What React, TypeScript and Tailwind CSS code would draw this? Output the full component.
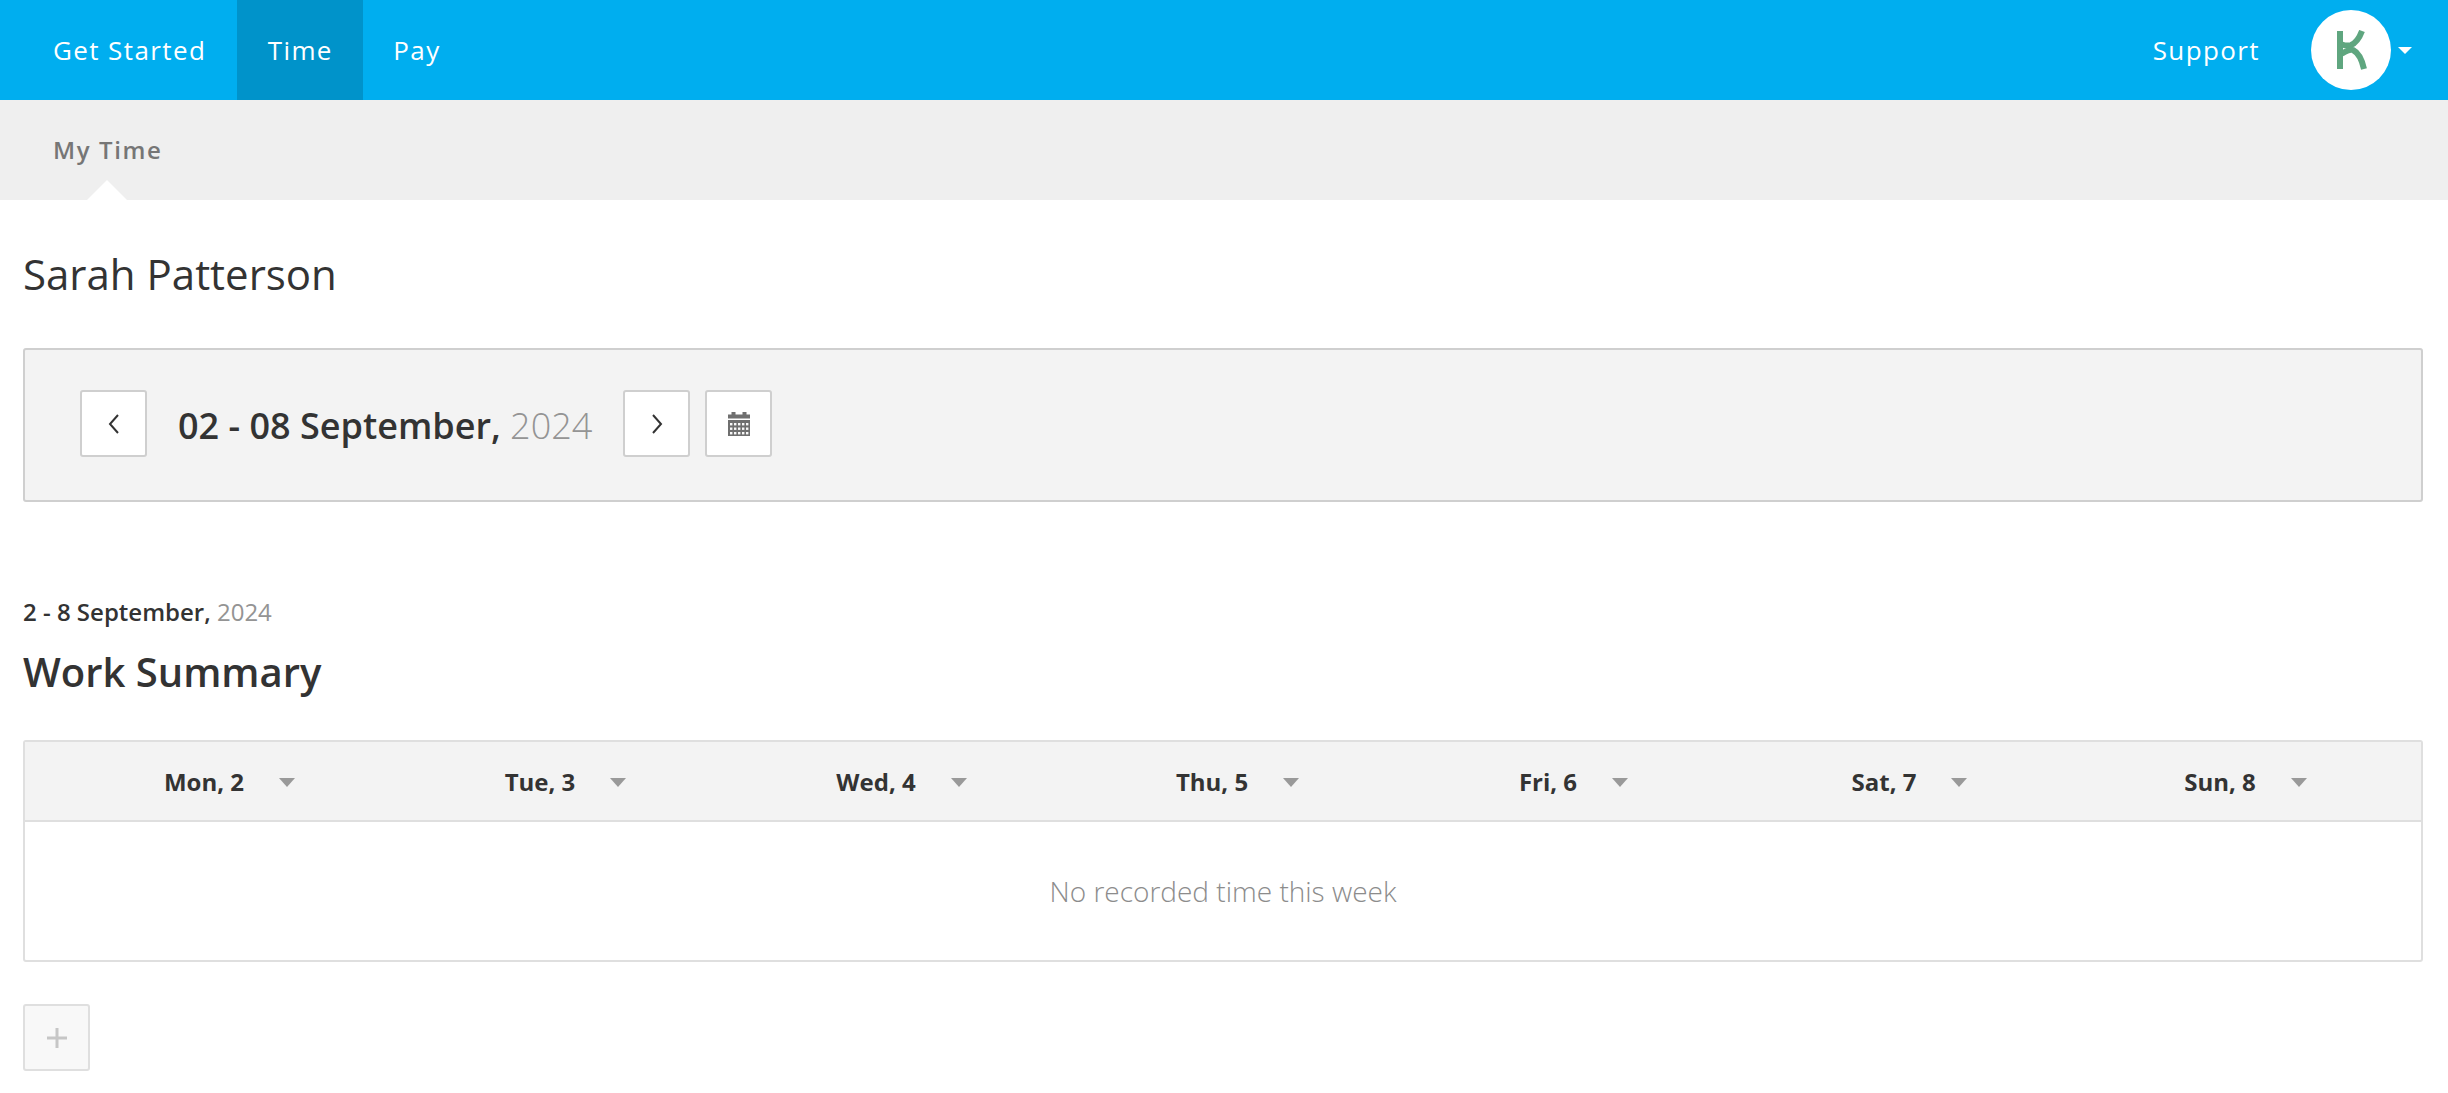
const days = ["Mon, 2", "Tue, 3", "Wed, 4", "Thu, 5", "Fri, 6", "Sat, 7", "Sun, 8"];

function CalendarIcon() {
  return (
    <svg width="22" height="24" viewBox="0 0 22 24" fill="#6f6f6f">
      <path d="M0 2.5h3.5V0h4v2.5h7V0h4v2.5H22v4H0zM0 8h22v16H0z" />
      <g fill="#f8f8f8">
        {[11, 15.5, 20].map((y) =>
          [2, 6, 10, 14, 18].map((x) => (
            <rect key={`${x}-${y}`} x={x} y={y} width="2.4" height="2.4" />
          ))
        )}
      </g>
    </svg>
  );
}

function Chevron({ left }: { left?: boolean }) {
  return (
    <svg width="12" height="20" viewBox="0 0 12 20" fill="none" stroke="#333" strokeWidth="2">
      <path d={left ? "M10 1L2 10l8 9" : "M2 1l8 9-8 9"} />
    </svg>
  );
}

function NavButton({ children }: { children: React.ReactNode }) {
  return (
    <button className="flex h-[67px] w-[67px] items-center justify-center rounded-[3px] border-2 border-[#cfcfcf] bg-white">
      {children}
    </button>
  );
}

export default function App() {
  return (
    <div className="min-h-[1093px] bg-white font-['Open_Sans',sans-serif] text-[#333]">
      {/* Top nav */}
      <header className="flex h-[100px] items-stretch bg-[#00aeef] text-[26px] tracking-[1.4px] text-white">
        <a className="flex items-center pl-[53px] pr-[31px]">Get Started</a>
        <a className="flex w-[126px] items-center justify-center bg-[#0093ca]">Time</a>
        <a className="flex items-center pl-[30px]">Pay</a>
        <div className="ml-auto flex items-center">
          <a className="mr-[51px]">Support</a>
          <div className="flex h-[80px] w-[80px] items-center justify-center rounded-full bg-white">
            <svg className="ml-[2px]" width="32" height="40" viewBox="0 0 32 40" fill="none" stroke="#5fa67f" strokeWidth="6">
              <path d="M4 1v38" />
              <path d="M26 1C23 9 20 13 15 15 12 16 9 15.5 6 14.5" />
              <path d="M28 39C26 30 23 23 17 20 13 18.5 10 21.5 6 23.5" />
            </svg>
          </div>
          <span className="ml-[7px] mr-[36px] h-0 w-0 border-x-[7px] border-t-[7px] border-x-transparent border-t-white" />
        </div>
      </header>

      {/* Sub nav */}
      <nav className="relative flex h-[100px] items-center bg-[#efefef] pl-[53px] text-[24px] font-semibold tracking-[1.6px] text-[#767676]">
        My Time
        <span className="absolute bottom-0 left-[87px] h-0 w-0 border-x-[20px] border-b-[20px] border-x-transparent border-b-white" />
      </nav>

      <main className="pl-[23px] pr-[25px]">
        <h1 className="mt-[47px] text-[42px] leading-[54px]">Sarah Patterson</h1>

        {/* Week picker */}
        <section className="mt-[47px] flex h-[154px] items-center rounded-[3px] border-2 border-[#cfcfcf] bg-[#f3f3f3] pl-[55px]">
          <div className="-mt-[3px] flex items-center">
            <NavButton><Chevron left /></NavButton>
            <div className="ml-[31px] mt-[4px] w-[445px] text-[36px] leading-none">
              <span className="font-semibold">02 - 08 September, </span>
              <span className="font-light text-[#949494]">2024</span>
            </div>
            <NavButton><Chevron /></NavButton>
            <div className="ml-[15px]">
              <NavButton><CalendarIcon /></NavButton>
            </div>
          </div>
        </section>

        <p className="mt-[94px] text-[24px] leading-[32px]">
          <span className="font-semibold">2 - 8 September, </span>
          <span className="text-[#949494]">2024</span>
        </p>
        <h2 className="mt-[17px] text-[40px] font-semibold leading-[54px]">Work Summary</h2>

        {/* Summary table */}
        <section className="mt-[41px] overflow-hidden rounded-[3px] border-2 border-[#dfdfdf]">
          <div className="grid h-[80px] grid-cols-[repeat(7,336px)] items-center border-b-2 border-[#dfdfdf] bg-[#f3f3f3] pl-[11px] pt-[1px]">
            {days.map((day) => (
              <div key={day} className="text-center text-[24px] font-bold">
                <span className="relative">
                  {day}
                  <span className="absolute left-[calc(100%+35px)] top-[13px] h-0 w-0 border-x-[8px] border-t-[9px] border-x-transparent border-t-[#999]" />
                </span>
              </div>
            ))}
          </div>
          <div className="flex h-[138px] items-center justify-center text-[28px] font-light text-[#8c8c8c]">
            No recorded time this week
          </div>
        </section>

        <button className="mt-[42px] flex h-[67px] w-[67px] items-center justify-center rounded-[3px] border-2 border-[#dfdfdf] bg-[#f8f8f8]">
          <svg width="20" height="20" viewBox="0 0 20 20" stroke="#c6c6c6" strokeWidth="3">
            <path d="M10 0v20M0 10h20" />
          </svg>
        </button>
      </main>
    </div>
  );
}
